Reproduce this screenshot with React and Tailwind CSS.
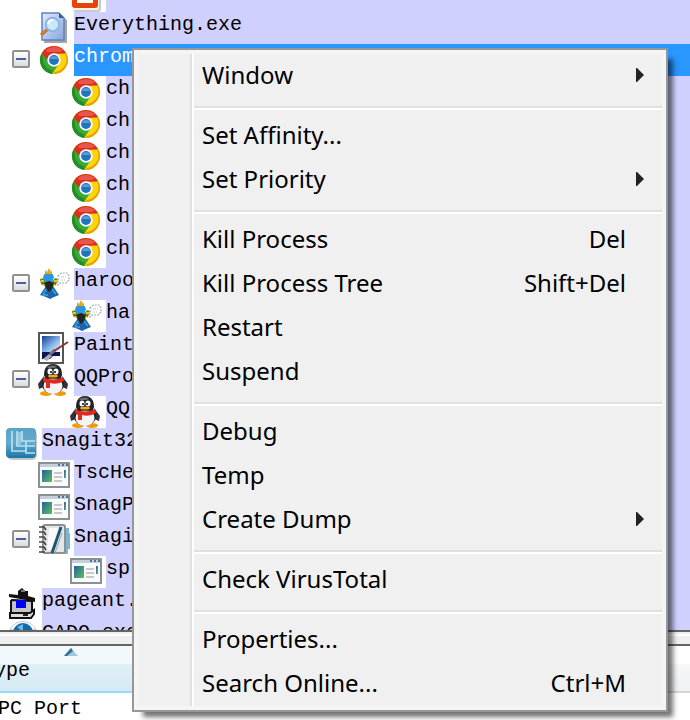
import React from "react";

function ChromeIcon() {
  return (
    <svg viewBox="0 0 32 32" className="size-8 shrink-0" aria-hidden="true">
      <circle cx="16" cy="16" r="14" fill="#ffd40a" />
      <path d="M16 16 L4 8.8 A14 14 0 0 0 14 29.9 L21.5 19 Z" fill="#3aa936" />
      <path d="M3.8 9 A14 14 0 0 1 28.3 9.5 L16 9.7 A6.3 6.3 0 0 0 10 14.5 L7.5 14.5 Z" fill="#dd2c20" />
      <path d="M8 5.9 A13.4 13.4 0 0 1 25 6.3 L22 8 H9 Z" fill="#e65748" />
      <path d="M28.3 9.5 A14 14 0 0 1 14.5 29.9 L17 28 A13 13 0 0 0 27.2 9.5 Z" fill="#e2a300" />
      <path d="M3.6 9.5 A14 14 0 0 0 14 29.9 L15 27 A13 13 0 0 1 4.8 12 Z" fill="#248c2c" />
      <circle cx="16" cy="16" r="6.7" fill="#f5f9ff" />
      <circle cx="16" cy="16" r="4.9" fill="#2372bd" />
      <path d="M11.7 15 A4.6 4.6 0 0 1 20.3 15 Z" fill="#5b9bda" />
    </svg>
  );
}

function SearchDocIcon() {
  return (
    <svg viewBox="0 0 32 32" className="size-8 shrink-0" aria-hidden="true">
      <defs>
        <linearGradient id="docFill" x1="0" y1="0" x2="1" y2="1">
          <stop offset="0" stopColor="#dfeafc" />
          <stop offset="1" stopColor="#86a7dd" />
        </linearGradient>
      </defs>
      <path d="M6 3 H23 L29 8 V31 H6 Z" fill="#777" opacity="0.65" />
      <path d="M4 1 H21 L26 6 V28 H4 Z" fill="url(#docFill)" stroke="#6083bd" strokeWidth="1.5" />
      <path d="M21 1 V6 H26 Z" fill="#365b9b" />
      <path d="M3 23 L10 17" stroke="#c57c39" strokeWidth="3.5" />
      <circle cx="14.5" cy="12.5" r="6.7" fill="#c8eafa" stroke="#8eb4de" strokeWidth="2" />
      <path d="M10 12 A5 5 0 0 1 15 8" stroke="#fff" strokeWidth="2" fill="none" />
    </svg>
  );
}

function OrangeIcon() {
  return (
    <svg viewBox="0 0 32 32" className="size-8 shrink-0" aria-hidden="true">
      <rect x="3" y="3" width="28" height="29" rx="3" fill="#c9c9c9" />
      <rect x="1" y="1" width="28" height="29" rx="2" fill="#f7f2ee" />
      <rect x="2" y="2" width="26" height="26" rx="3" fill="#e64409" />
      <rect x="7" y="7" width="16" height="16" fill="#fff" />
    </svg>
  );
}

function BirdIcon() {
  return (
    <svg viewBox="0 0 32 32" className="size-8 shrink-0" aria-hidden="true">
      <path d="M8 18 L2 27 L8 29 L12 31 L16 29 L21 27 L15 18 Z" fill="#1b65a8" />
      <path d="M8 21 L5 27 H10 M14 21 L18 26" stroke="#3fa1dd" strokeWidth="1.5" fill="none" />
      <path d="M2 11 L6 10 L8 14 H14 L17 10 L20 11 L18 17 L14 19 H8 L3 16 Z" fill="#777d18" />
      <path d="M3 13 H6 M16 13 H19 M5 17 H7 M15 17 H17" stroke="#c8d62b" strokeWidth="2" />
      <path d="M7 5 H14 L16 9 L14 15 H8 L5 9 Z" fill="#2897e2" />
      <path d="M6 15 L11 13 L16 15 L14 21 L11 24 L8 20 Z" fill="#242421" />
      <path d="M7 2 L9 4 L11 0 L13 4 L14 2 V6 H7 Z" fill="#f1a515" />
      <path d="M20 8 L23 5 H29 L31 8 V12 L28 15 H22 L20 17 V12 Z" fill="#fff" stroke="#aaa" strokeWidth="1.2" strokeDasharray="2 1" />
      <path d="M23 9 H28 M22 12 H27" stroke="#bbb" strokeDasharray="1 1" />
    </svg>
  );
}

function PaintIcon() {
  return (
    <svg viewBox="0 0 32 32" className="size-8 shrink-0" aria-hidden="true">
      <defs>
        <linearGradient id="canvasFill" x1="0" y1="0" x2="1" y2="1">
          <stop offset="0" stopColor="#123f9c" />
          <stop offset="0.55" stopColor="#84b3e6" />
          <stop offset="1" stopColor="#eef7ff" />
        </linearGradient>
      </defs>
      <rect x="1" y="1" width="24" height="30" fill="#fff" stroke="#555" strokeWidth="2" />
      <rect x="4" y="4" width="18" height="16" fill="url(#canvasFill)" />
      <path d="M4 20 H22 V24 H15 L12 27 H4 Z" fill="#0d1654" />
      <path d="M5 27 L11 22 L14 24 L9 29 Z" fill="#aab0b6" />
      <path d="M12 22 L17 18" stroke="#777" strokeWidth="3" />
      <path d="M16 19 L30 10" stroke="#962d35" strokeWidth="2" />
    </svg>
  );
}

function PenguinIcon() {
  return (
    <svg viewBox="0 0 32 32" className="size-8 shrink-0" aria-hidden="true">
      <ellipse cx="8" cy="29.500" rx="6" ry="2.500" fill="#f39b0b" />
      <ellipse cx="22" cy="29.500" rx="6" ry="2.500" fill="#f39b0b" />
      <path d="M6 12 L0 20 L1 25 L6 23 Z M24 12 L30 20 L29 25 L24 23 Z" fill="#30313b" />
      <ellipse cx="15" cy="20" rx="11" ry="10" fill="#202126" />
      <ellipse cx="15" cy="22" rx="9.500" ry="8" fill="#f5f5f7" />
      <path d="M6 11 C6 4 9 0 15 0 S24 4 24 11 C24 16 6 16 6 11 Z" fill="#222428" />
      <path d="M9 4 C11 1 16 1 19 3 L16 4 Z" fill="#6b6d72" />
      <ellipse cx="12" cy="7.500" rx="2.500" ry="3" fill="#fff" />
      <ellipse cx="18" cy="7.500" rx="2.500" ry="3" fill="#fff" />
      <circle cx="13" cy="8" r="1.100" fill="#111" />
      <circle cx="17" cy="8" r="1.100" fill="#111" />
      <ellipse cx="15" cy="12" rx="5" ry="1.600" fill="#f5a616" />
      <path d="M5 13 Q15 18 25 13 L26 17 Q20 21 12 19 V24 H8 V19 L5 17 Z" fill="#df2b1d" />
    </svg>
  );
}

function SnagitIcon() {
  return (
    <svg viewBox="0 0 32 32" className="size-8 shrink-0" aria-hidden="true">
      <defs>
        <linearGradient id="snagFill" x1="0" y1="0" x2="0" y2="1">
          <stop offset="0" stopColor="#5ba2c5" />
          <stop offset="0.5" stopColor="#62abcd" />
          <stop offset="1" stopColor="#1b75a7" />
        </linearGradient>
      </defs>
      <rect x="1" y="2" width="30" height="30" rx="5" fill="#c7c7c7" />
      <rect x="0" y="0" width="30" height="30" rx="4" fill="url(#snagFill)" />
      <path d="M6 3 V23 H20 M11 3 V18 H20 M16 3 V13 H29 M20 13 V25 H29 M20 18 H29" stroke="#b9e1ee" strokeWidth="1.700" fill="none" />
      <path d="M12 4 H15 V17 H12 Z" fill="#91cadf" />
    </svg>
  );
}

function AppWindowIcon() {
  return (
    <svg viewBox="0 0 32 32" className="size-8 shrink-0" aria-hidden="true">
      <defs>
        <linearGradient id="winPane" x1="0" y1="0" x2="1" y2="1">
          <stop offset="0" stopColor="#2264a0" />
          <stop offset="1" stopColor="#5fc05d" />
        </linearGradient>
      </defs>
      <rect x="1" y="3" width="30" height="24" fill="#fbfbfb" stroke="#8b9096" strokeWidth="2" />
      <rect x="2" y="4" width="28" height="3" fill="#c5d0dc" />
      <path d="M20 5 H22 M24 5 H26 M28 5 H30" stroke="#55738f" strokeWidth="2" />
      <rect x="4" y="10" width="10" height="12" fill="url(#winPane)" />
      <path d="M16 13 H24 M16 17 H24 M16 21 H24" stroke="#c9c9c9" strokeWidth="2" />
      <rect x="26" y="10" width="2" height="8" fill="url(#winPane)" />
    </svg>
  );
}

function NotebookIcon() {
  return (
    <svg viewBox="0 0 32 32" className="size-8 shrink-0" aria-hidden="true">
      <path d="M26 4 H31 V9 H32 V25 H30 V30 H26 Z" fill="#80b5ce" />
      <rect x="5" y="1" width="22" height="28" rx="2" fill="#e4e6e8" stroke="#8e9091" strokeWidth="2" />
      <path d="M11 4 H22 L14 26 H9 Z" fill="#fafafa" />
      <path d="M23 3 L14 29" stroke="#1c5873" strokeWidth="3" />
      <path d="M24 9 L17 29" stroke="#8badba" />
      <path d="M1 3 H6 L8 6 M1 8 H6 L8 11 M1 13 H6 L8 16 M1 18 H6 L8 21 M1 23 H6 L8 26 M1 28 H7" stroke="#444" strokeWidth="1.700" fill="none" />
    </svg>
  );
}

function PageantIcon() {
  return (
    <svg viewBox="0 0 32 32" className="size-8 shrink-0" aria-hidden="true">
      <path d="M6 12 L26 13 V27 H5 V13 Z" fill="#c4c4c4" stroke="#111" strokeWidth="2" />
      <path d="M12 3 L16 0 L19 3 L22 3 V8 L29 10 V14 L20 12 L3 9 V6 L12 7 Z" fill="#111" />
      <path d="M15 3 H19" stroke="#777" strokeWidth="2" />
      <rect x="10" y="12" width="10" height="8" fill="#0000f4" />
      <path d="M4 25 H24 L28 22 V26 L25 30 H4 Z" fill="#ddd" stroke="#111" strokeWidth="2" />
      <path d="M17 27 H22" stroke="#222" strokeWidth="2" />
    </svg>
  );
}

function DiscIcon() {
  return (
    <svg viewBox="0 0 32 32" className="size-8 shrink-0" aria-hidden="true">
      <circle cx="17" cy="16" r="15" fill="#cfd3d4" />
      <path d="M6 9 A13 13 0 0 1 28 9" stroke="#fff" strokeWidth="2" fill="none" />
      <circle cx="17" cy="13" r="10" fill="#1269a8" />
      <path d="M11 7 L17 4 V12 Z" fill="#70b8df" />
    </svg>
  );
}

const processes = [
  { name: "", level: 2, Icon: OrangeIcon },
  { name: "Everything.exe", level: 1, Icon: SearchDocIcon },
  { name: "chrome", level: 1, Icon: ChromeIcon, open: true, selected: true },
  { name: "chrome", level: 2, Icon: ChromeIcon },
  { name: "chrome", level: 2, Icon: ChromeIcon },
  { name: "chrome", level: 2, Icon: ChromeIcon },
  { name: "chrome", level: 2, Icon: ChromeIcon },
  { name: "chrome", level: 2, Icon: ChromeIcon },
  { name: "chrome", level: 2, Icon: ChromeIcon },
  { name: "haroopad", level: 1, Icon: BirdIcon, open: true },
  { name: "haroopad", level: 2, Icon: BirdIcon },
  { name: "PaintDot", level: 1, Icon: PaintIcon },
  { name: "QQProtect", level: 1, Icon: PenguinIcon, open: true },
  { name: "QQ.exe", level: 2, Icon: PenguinIcon },
  { name: "Snagit32.exe", level: 0, Icon: SnagitIcon },
  { name: "TscHelp", level: 1, Icon: AppWindowIcon },
  { name: "SnagPriv", level: 1, Icon: AppWindowIcon },
  { name: "Snagit", level: 1, Icon: NotebookIcon, open: true },
  { name: "sp", level: 2, Icon: AppWindowIcon },
  { name: "pageant.exe", level: 0, Icon: PageantIcon },
  { name: "CADQ.exe", level: 0, Icon: DiscIcon },
];

const indents = ["pl-[6px]", "pl-[38px]", "pl-[70px]"];

function ProcessRow({ name, level, Icon, open, selected }) {
  return (
    <li className={`flex h-8 ${open ? "pl-3" : indents[level]}`}>
      {open && (
        <button
          type="button"
          aria-label={`Collapse ${name}`}
          className="mt-1.5 mr-2 flex size-[18px] shrink-0 items-center justify-center rounded-[2px] border-2 border-[#919191] bg-linear-to-b from-white to-[#dcdcdc]"
        >
          <span className="h-0.5 w-2.5 bg-[#4960a8]" />
        </button>
      )}
      <Icon />
      <span
        className={`ml-1 h-8 flex-1 whitespace-nowrap leading-[26px] ${
          selected ? "bg-[#2a96ff] text-white" : "bg-[#d0d0ff] text-black"
        }`}
      >
        {name}
      </span>
    </li>
  );
}

const menuGroups = [
  [{ label: "Window", submenu: true }],
  [{ label: "Set Affinity..." }, { label: "Set Priority", submenu: true }],
  [
    { label: "Kill Process", keys: "Del" },
    { label: "Kill Process Tree", keys: "Shift+Del" },
    { label: "Restart" },
    { label: "Suspend" },
  ],
  [{ label: "Debug" }, { label: "Temp" }, { label: "Create Dump", submenu: true }],
  [{ label: "Check VirusTotal" }],
  [{ label: "Properties..." }, { label: "Search Online...", keys: "Ctrl+M" }],
];

function MenuItem({ label, keys, submenu }) {
  return (
    <button type="button" role="menuitem" className="flex h-11 w-full items-center pb-0.5 pl-2 text-left">
      <span className="flex-1">{label}</span>
      {keys && <span className="pr-9">{keys}</span>}
      {submenu && (
        <svg viewBox="0 0 8 14" className="mr-[18px] h-3.5 w-2" aria-hidden="true">
          <path d="M0 0 H1 L8 7 L1 14 H0 Z" fill="#222" />
        </svg>
      )}
    </button>
  );
}

function ContextMenu() {
  return (
    <div
      role="menu"
      className="absolute top-12 left-[132px] w-[536px] border-2 border-[#979797] bg-[#f5f5f5] p-1 font-['Noto_Sans','Open_Sans',sans-serif] text-2xl text-black shadow-[8px_8px_5px_-3px_rgba(0,0,0,0.55)]"
    >
      <div className="flex bg-[#f0f0f0]">
        <div className="w-14 shrink-0 border-r-2 border-white">
          <div className="h-full border-r-2 border-[#e0e0e0]" />
        </div>
        <div className="flex-1">
          {menuGroups.map((group, index) => (
            <div key={group[0].label} role="group">
              {index > 0 && (
                <div role="separator" className="pt-2 pb-1">
                  <div className="h-1 border-t-2 border-b-2 border-t-[#e0e0e0] border-b-white" />
                </div>
              )}
              {group.map((item) => (
                <MenuItem key={item.label} {...item} />
              ))}
            </div>
          ))}
        </div>
      </div>
    </div>
  );
}

export default function App() {
  return (
    <main className="relative flex h-screen flex-col overflow-hidden bg-white font-['Liberation_Mono',monospace] text-xl">
      <section aria-label="Processes" className="min-h-0 flex-1 overflow-hidden">
        <ul className="-mt-5">
          {processes.map((process, index) => (
            <ProcessRow key={index} {...process} />
          ))}
        </ul>
      </section>

      <div className="h-4 shrink-0 border-y-2 border-[#656565] bg-[#f0f0f0]">
        <div className="mt-0.5 h-0.5 bg-white" />
      </div>

      <section aria-label="Handles" className="h-[74px] shrink-0 overflow-hidden">
        <table className="w-full table-fixed border-collapse">
          <thead>
            <tr className="h-[46px] text-left">
              <th className="relative w-[600px] border-b-2 border-[#96d9f9] bg-linear-to-b from-[#f2f9fd] from-40% via-[#e1f0f7] via-40% to-[#d5eaf4] p-0 pt-1 font-normal">
                <svg viewBox="0 0 14 8" className="absolute top-0.5 left-16 h-2 w-3.5" aria-hidden="true">
                  <path d="M0 8 L7 0 L14 8 Z" fill="#9dc9de" />
                  <path d="M0 8 L7 0 L9 3 L3 8 Z" fill="#3d6e8d" />
                </svg>
                <span className="-ml-[18px]">Type</span>
              </th>
              <th className="border-b-2 border-[#d5d5d5] bg-linear-to-b from-white from-40% via-[#f6f7f9] via-40% to-[#eff1f3] p-0" />
            </tr>
          </thead>
          <tbody>
            <tr className="h-8">
              <td className="p-0 pt-0.5 align-top">
                <span className="-ml-[26px]">ALPC Port</span>
              </td>
              <td />
            </tr>
          </tbody>
        </table>
      </section>

      <ContextMenu />
    </main>
  );
}
